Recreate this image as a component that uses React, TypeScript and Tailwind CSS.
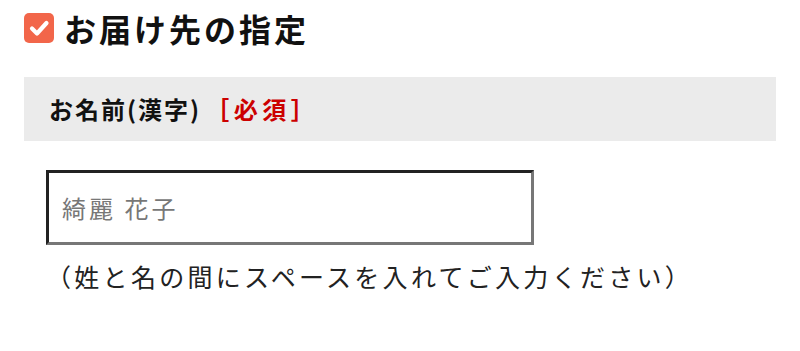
import React from 'react';

const CheckIcon: React.FC = () => (
  <svg width="30" height="30" viewBox="0 0 30 30" className="shrink-0">
    <rect x="0" y="0" width="30" height="30" rx="5" fill="#f2664a" />
    <path d="M8 15.5 L13 20.5 L22.5 10" fill="none" stroke="#fff" strokeWidth="4.2" strokeLinecap="round" strokeLinejoin="round" />
  </svg>
);

export default function App() {
  return (
    <div
      className="w-[800px] h-[351px] bg-white px-6 overflow-hidden text-[#111]"
      style={{ fontFamily: '"Noto Sans CJK JP", "Noto Sans", sans-serif' }}
    >
      <div className="pt-[13px] h-[43px] flex items-center gap-[10px]">
        <CheckIcon />
        <h2 className="text-[32px] font-bold leading-none tracking-[3px]">お届け先の指定</h2>
      </div>

      <div className="mt-[34px] h-[64px] bg-[#ebebeb] flex items-center px-[25px]">
        <span className="text-[24px] font-bold leading-none tracking-[2px]">
          お名前(漢字)
          <span className="ml-[4px] text-[#cc0000] tracking-[4.5px]">［必須］</span>
        </span>
      </div>

      <div className="pl-[22px] border-b-2 border-[#ebebeb] h-[210px]">
        <input
          type="text"
          placeholder="綺麗 花子"
          className="mt-[29px] block w-[488px] h-[75px] px-[13px] border-t-[3px] border-l-[3px] border-b-[3px] border-r-[3px] border-t-[#222] border-l-[#222] border-b-[#777] border-r-[#777] text-[24px] tracking-[3px] placeholder:text-[#777] outline-none"
        />
        <p className="mt-[13px] text-[25px] leading-[36px] tracking-[3.3px] text-[#222]">
          （姓と名の間にスペースを入れてご入力ください）
        </p>
      </div>
    </div>
  );
}
